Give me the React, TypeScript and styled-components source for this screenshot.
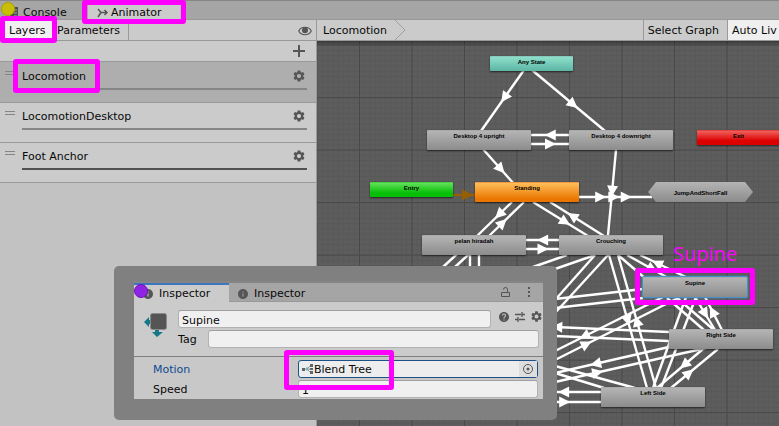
import React from "react";
import styled, { createGlobalStyle, css } from "styled-components";
import { MdHelp, MdInfo, MdSettings } from "react-icons/md";

const GlobalStyle = createGlobalStyle`
  * { box-sizing: border-box; }
  body { margin: 0; overflow: hidden; }
  button, input { font: inherit; color: inherit; }
`;

const ink = "#090909";
const line = "#999999";
const panel = "#cbcbcb";
const iconGrey = "#555555";
const magenta = "#ff00ff";

const Window = styled.div`
  position: relative;
  display: flex;
  flex-direction: column;
  min-height: 100vh;
  overflow: hidden;
  background: #c2c2c2;
  color: ${ink};
  font: 11px/16px "DejaVu Sans", Verdana, sans-serif;
`;

const Highlight = styled.span<{ $x: number; $top: number; $bottom: number }>`
  position: absolute;
  z-index: 3;
  left: ${(p) => -p.$x}px;
  right: ${(p) => -p.$x}px;
  top: ${(p) => -p.$top}px;
  bottom: ${(p) => -p.$bottom}px;
  border: 5px solid ${magenta};
  border-radius: 3px;
  pointer-events: none;
`;

const Dot = styled.span<{ $color: string; $edge: string }>`
  position: absolute;
  z-index: 2;
  left: 1px;
  top: 1px;
  width: 14px;
  height: 14px;
  border: 1px solid ${(p) => p.$edge};
  border-radius: 50%;
  background: ${(p) => p.$color};
`;

const PlainButton = styled.button`
  display: flex;
  align-items: center;
  padding: 0;
  border: 0;
  background: none;
  white-space: nowrap;
`;

const TabBar = styled.div`
  position: relative;
  display: flex;
  height: 20px;
  padding-top: 2px;
  border-top: 1px solid #868686;
  border-bottom: 1px solid ${line};
  background: #a5a5a5;
`;

const ConsoleTab = styled(PlainButton)`
  width: 88px;
  padding: 3px 0 0 10px;
  gap: 5px;
`;

const AnimatorTab = styled(PlainButton)`
  position: relative;
  width: 96px;
  padding: 3px 0 0 9px;
  gap: 3px;
  border-right: 4px solid #bbbbbb;
  background: ${panel};
`;

const Body = styled.div`
  display: flex;
  flex: 1;
`;

const Sidebar = styled.aside`
  flex: 0 0 317px;
  border-right: 1px solid ${line};
`;

const Toolbar = styled.div`
  display: flex;
  height: 21px;
  border-bottom: 1px solid ${line};
  background: ${panel};
`;

const LayersButton = styled(PlainButton)`
  position: relative;
  margin-left: 5px;
  width: 47px;
  padding: 2px 0 0 4px;
  background: #f0f0f0;
`;

const ParametersButton = styled(PlainButton)`
  padding: 2px 8px 0 5px;
  border-right: 1px solid ${line};
`;

const EyeButton = styled(PlainButton)`
  margin-left: auto;
  padding: 1px 4px 0 0;
`;

const AddRow = styled.div`
  display: flex;
  justify-content: flex-end;
  height: 21px;
  padding-right: 11px;
  border-bottom: 1px solid ${line};
  background: ${panel};
`;

const LayerList = styled.ul`
  margin: 0;
  padding: 0;
  list-style: none;
`;

const LayerItem = styled.li<{ $selected?: boolean }>`
  display: flex;
  height: ${(p) => (p.$selected ? 41 : 40)}px;
  padding: ${(p) => (p.$selected ? 6 : 5)}px 9px 0 5px;
  border-bottom: 1px solid ${line};
  background: ${(p) => (p.$selected ? "#aeaeae" : panel)};
`;

const Handle = styled.span`
  width: 10px;
  height: 4px;
  margin: 3px 7px 0 0;
  border: solid #858585;
  border-width: 1px 0;
`;

const LayerBody = styled.div<{ $weight: string }>`
  display: flex;
  flex: 1;
  justify-content: space-between;
  align-items: center;
  height: 22px;
  padding: 0 1px 4px 0;
  border-bottom: 2px solid ${(p) => p.$weight};
`;

const LayerName = styled.span`
  position: relative;
  min-width: 69px;
  padding-top: 2px;
`;

const GraphPanel = styled.main`
  display: flex;
  flex: 1;
  flex-direction: column;
  min-width: 0;
`;

const Crumb = styled(PlainButton)`
  padding-left: 6px;
  gap: 7px;
`;

const CrumbText = styled.span`
  padding-top: 2px;
`;

const ToolButton = styled(PlainButton)<{ $on?: boolean }>`
  padding: 2px 8px 0 4px;
  border-left: 1px solid ${line};
  ${(p) => p.$on && css`width: 52px; padding-right: 0; overflow: hidden; background: #efefef;`}
`;

const Spacer = styled.span`
  flex: 1;
`;

const Canvas = styled.div`
  position: relative;
  flex: 1;
  overflow: hidden;
  background: #5d5d5d;
`;

const CanvasShade = styled.div`
  position: relative;
  height: 5px;
  background: linear-gradient(rgba(0, 0, 0, 0.4), transparent);
`;

const Wires = styled.svg`
  position: absolute;
  inset: 0;
  width: 100%;
  height: 100%;
`;

const fills = {
  grey: "linear-gradient(#b4b4b4, #8c8c8c)",
  teal: "linear-gradient(#8edfc9, #5cb5a5)",
  green: "linear-gradient(#62e05a, #07bf07 70%)",
  orange: "linear-gradient(#ffbe5a, #ea7600 85%)",
  red: "linear-gradient(#f0605c, #dc0000 70%)",
};
type Fill = keyof typeof fills;

const Node = styled.div<{ $x: number; $y: number; $fill: Fill; $small?: boolean; $selected?: boolean }>`
  position: absolute;
  left: ${(p) => p.$x}px;
  top: ${(p) => p.$y}px;
  width: ${(p) => (p.$small ? 83 : 104)}px;
  height: ${(p) => (p.$small ? 15 : 20)}px;
  padding-top: 2px;
  border-top: 1px solid rgba(255, 255, 255, 0.25);
  border-radius: 1px;
  background: ${(p) => fills[p.$fill]};
  box-shadow: ${(p) => (p.$selected ? "0 0 0 1px #4a90c8, 0 0 2px 1px #4a90c8" : "0 1px 2px rgba(0, 0, 0, 0.6)")};
  color: #000000;
  font: bold 6px/7px "Liberation Sans", Arial, sans-serif;
  text-align: center;
`;

const HexNode = styled(Node)`
  width: 105px;
  padding-top: 8px;
  border-top: 0;
  clip-path: polygon(8px 0, 97px 0, 100% 50%, 97px 100%, 8px 100%, 0 50%);
`;

const Callout = styled.div`
  position: absolute;
  left: 356px;
  top: 199px;
  color: ${magenta};
  font: 20px/28px "Open Sans", sans-serif;
`;

const Popup = styled.section`
  position: absolute;
  z-index: 4;
  left: 114px;
  top: 266px;
  width: 443px;
  padding: 15px 14px 21px 20px;
  border-radius: 5px;
  background: #808080;
`;

const PopupBody = styled.div`
  height: 118px;
`;

const InspectorTabs = styled.div`
  display: flex;
  height: 21px;
  border-top: 2px solid #858585;
  background: #a5a5a5;
`;

const InspectorTab = styled(PlainButton)<{ $active?: boolean }>`
  position: relative;
  width: 96px;
  padding: 2px 0 0 8px;
  gap: 5px;
  border-top: 2px solid transparent;
  border-bottom: 1px solid ${line};
  ${(p) => p.$active && css`width: 95px; border-top-color: #3c76c0; border-bottom-color: ${panel}; background: ${panel};`}
`;

const InspectorDot = styled(Dot)`
  left: 0;
  top: -1px;
`;

const TabActions = styled.div`
  display: flex;
  flex: 1;
  justify-content: flex-end;
  align-items: center;
  gap: 8px;
  padding-right: 11px;
  border-bottom: 1px solid ${line};
`;

const StateHeader = styled.div`
  display: grid;
  grid-template-columns: 34px 1fr;
  gap: 10px;
  height: 55px;
  padding: 8px 4px 0 0;
  border-bottom: 1px solid #7f7f7f;
  background: ${panel};

  > svg { margin: 2px 0 0 9px; }
`;

const HeaderFields = styled.div`
  display: flex;
  flex-direction: column;
  gap: 2px;
`;

const Row = styled.div`
  display: flex;
  align-items: center;
  height: 18px;
`;

const Field = styled.input`
  flex: 1;
  min-width: 0;
  height: 18px;
  padding: 2px 3px 0;
  border: 1px solid #b2b2b2;
  border-top-color: #a0a0a0;
  border-radius: 3px;
  background: #f0f0f0;
  outline: none;
`;

const TagLabel = styled.label`
  width: 30px;
  padding-top: 1px;
`;

const HeaderActions = styled.div`
  display: flex;
  align-self: flex-start;
  gap: 4px;
  padding: 0 0 0 7px;
  margin-right: -4px;
  color: ${iconGrey};
`;

const Props = styled.div`
  display: flex;
  flex-direction: column;
  gap: 2px;
  height: 42px;
  padding: 3px 5px 0 19px;
  background: #c8c8c8;
`;

const PropLabel = styled.label<{ $active?: boolean }>`
  width: 145px;
  padding-top: 2px;
  color: ${(p) => (p.$active ? "#0d4a90" : ink)};
`;

const MotionField = styled.div`
  position: relative;
  display: flex;
  flex: 1;
  align-items: center;
  height: 18px;
  padding: 0 0 0 3px;
  border: 1px solid #1d5087;
  border-radius: 3px;
  background: #ededed;

  input { flex: 1; min-width: 0; padding: 2px 0 0; border: 0; background: none; outline: none; }
`;

const Picker = styled(PlainButton)`
  justify-content: center;
  width: 18px;
  height: 16px;
  background: #dedede;
`;

const MotionHighlight = styled(Highlight)`
  left: -15px;
  right: 143px;
`;

type Wire = [number, number, number, number, ...number[]];

// x1, y1, x2, y2, then the distances along the line, in percent, of its arrow heads;
// a negative distance turns the head back towards the start.
const wires: Wire[] = [
  [524, 70, 481, 131, 45],
  [532, 70, 605, 131, 56],
  [569, 135, 531, 135, 48],
  [531, 144, 569, 144, 50],
  [482, 148, 514, 184, 58],
  [579, 197, 652, 197, 29, 47, 64],
  [616, 150, 608, 235, 48],
  [512, 202, 477, 236, 36],
  [489, 236, 524, 202, 38],
  [533, 202, 588, 236, 58],
  [604, 236, 550, 202, 58],
  [559, 240, 526, 240, 48],
  [526, 249, 559, 249, 50],
  [457, 254, 443, 267],
  [469, 254, 455, 267],
  [470, 254, 470, 268],
  [479, 254, 479, 268],
  [567, 255, 533, 267],
  [595, 255, 555, 269],
  [595, 255, 555, 300],
  [608, 255, 555, 313],
  [609, 255, 647, 388, 49],
  [618, 255, 656, 388, -50],
  [618, 255, 646, 279],
  [627, 255, 670, 279, 58],
  [640, 255, 690, 279, -35],
  [555, 299, 643, 289],
  [555, 308, 643, 298],
  [555, 351, 665, 296, -27],
  [555, 360, 680, 297, 25],
  [669, 332, 555, 327, 98],
  [669, 341, 555, 336],
  [669, 347, 555, 373, 64],
  [555, 382, 706, 348, 28],
  [555, 366, 635, 388],
  [555, 373, 604, 388],
  [601, 392, 555, 392, 80],
  [555, 402, 601, 402, 20],
  [686, 297, 653, 388],
  [696, 297, 661, 388],
  [667, 298, 704, 330],
  [677, 298, 714, 330],
  [695, 297, 715, 330, 50],
  [705, 297, 722, 330, -45],
  [703, 349, 657, 388, 40],
  [718, 349, 671, 388, -62],
];

function Connection({ wire, color = "#ffffff" }: { wire: Wire; color?: string }) {
  const [x1, y1, x2, y2, ...heads] = wire;
  const angle = (Math.atan2(y2 - y1, x2 - x1) * 180) / Math.PI;
  return (
    <g fill={color} stroke="none">
      <line x1={x1} y1={y1} x2={x2} y2={y2} stroke={color} strokeWidth="2.4" />
      {heads.map((h) => {
        const t = Math.abs(h) / 100;
        const turn = angle + (h < 0 ? 180 : 0);
        return (
          <path
            key={h}
            d="M-5-5.5 6 0-5 5.5z"
            transform={`translate(${x1 + (x2 - x1) * t} ${y1 + (y2 - y1) * t}) rotate(${turn})`}
          />
        );
      })}
    </g>
  );
}

function GraphLines() {
  return (
    <Wires aria-hidden="true">
      <defs>
        <pattern id="minor" x="42" y="3.6" width="5.25" height="5.25" patternUnits="userSpaceOnUse">
          <path d="M.5 0v5.25M0 .5h5.25" stroke="#585858" strokeWidth="1" />
        </pattern>
        <pattern id="major" x="42" y="3.6" width="52.5" height="52.5" patternUnits="userSpaceOnUse">
          <path d="M.5 0v52.5M0 .5h52.5" stroke="#494949" strokeWidth="1" />
        </pattern>
      </defs>
      <rect width="100%" height="100%" fill="url(#minor)" />
      <rect width="100%" height="100%" fill="url(#major)" />
      <g transform="translate(-317 -41)">
        <Connection wire={[453, 195, 475, 195, 64]} color="#966000" />
        {wires.map((w) => (
          <Connection key={w.join()} wire={w} />
        ))}
      </g>
    </Wires>
  );
}

const nodes: { name: string; x: number; y: number; fill: Fill; small?: boolean }[] = [
  { name: "Any State", x: 173, y: 15, fill: "teal", small: true },
  { name: "Desktop 4 upright", x: 110, y: 89, fill: "grey" },
  { name: "Desktop 4 downright", x: 252, y: 89, fill: "grey" },
  { name: "Exit", x: 380, y: 89, fill: "red", small: true },
  { name: "Entry", x: 53, y: 141, fill: "green", small: true },
  { name: "Standing", x: 158, y: 141, fill: "orange" },
  { name: "pelan hiradah", x: 105, y: 194, fill: "grey" },
  { name: "Crouching", x: 242, y: 194, fill: "grey" },
  { name: "Right Side", x: 352, y: 288, fill: "grey" },
  { name: "Left Side", x: 284, y: 346, fill: "grey" },
];

const layers = [
  { name: "Locomotion", weight: "#868686", selected: true },
  { name: "LocomotionDesktop", weight: "#868686" },
  { name: "Foot Anchor", weight: "#515151" },
];

const ConsoleIcon = () => (
  <svg width="8" height="12" viewBox="0 0 8 12">
    <path d="M0 0h8v12H0z" fill="#4e4e4e" />
    <path d="M4 3h3M4 6h3M4 9h3" stroke="#a5a5a5" />
  </svg>
);

const AnimatorIcon = () => (
  <svg width="11" height="10" viewBox="0 0 11 10" fill="none" stroke={iconGrey} strokeWidth="1.5">
    <path d="M1 1l3 3.5h6M1 9l3-4.5M7.5 2 10 4.5 7.5 7" />
  </svg>
);

const EyeIcon = () => (
  <svg width="14" height="10" viewBox="0 0 14 10">
    <path d="M.7 5C3 0 11 0 13.3 5 11 10 3 10 .7 5z" fill="none" stroke={iconGrey} strokeWidth="1.1" />
    <circle cx="7" cy="4.3" r="3" fill={iconGrey} />
  </svg>
);

const PlusIcon = () => (
  <svg width="12" height="12" viewBox="0 0 12 12" stroke={iconGrey} strokeWidth="2">
    <path d="M6 0v12M0 6h12" />
  </svg>
);

const CrumbArrow = () => (
  <svg width="12" height="20" viewBox="0 0 12 20" fill="none" stroke="#a0a0a0">
    <path d="M1 0l10 10L1 20" />
  </svg>
);

const LockIcon = () => (
  <svg width="9" height="10" viewBox="0 0 9 10" fill="none" stroke={iconGrey}>
    <path d="M.5 5.500h8v4h-8zM6.500 5.500V2.500a2 2 0 0 0-4 0" />
  </svg>
);

const MenuIcon = () => (
  <svg width="14" height="12" viewBox="0 0 14 12" fill={iconGrey}>
    <path d="M10 1h2v2h-2zM10 5h2v2h-2zM10 9h2v2h-2z" />
  </svg>
);

const PresetIcon = () => (
  <svg width="12" height="12" viewBox="0 0 12 12" fill="none" stroke={iconGrey} strokeWidth="1.3">
    <path d="M1 3.500h6M8 1v5M8 3.500h3M1 8.500h2.500M4 6v5M5 8.500h6" />
  </svg>
);

const StateIcon = () => (
  <svg width="24" height="25" viewBox="0 0 24 25">
    <path d="M1 10 6 5v3h3v4H6v3zM12 17h4v3h4l-6 5-5-5h3z" fill="#147987" />
    <rect x="7.5" y="1.5" width="16" height="16" rx="2" fill="#555555" stroke="#8a8a8a" />
  </svg>
);

const TreeIcon = () => (
  <svg width="12" height="12" viewBox="0 0 12 12">
    <path d="M2 6h3l4-4M5 6h5M5 6l4 4M5 4v4" fill="none" stroke="#7ba5a8" />
    <path d="M0 5h3v3H0zM8 1h3v3H8zM8 5h3v2H8zM8 8h3v3H8z" fill="#5e6667" />
  </svg>
);

const PickerIcon = () => (
  <svg width="12" height="12" viewBox="0 0 12 12">
    <circle cx="6" cy="6" r="4.5" fill="none" stroke={iconGrey} />
    <circle cx="6" cy="6" r="1.5" fill={iconGrey} />
  </svg>
);

function Inspector() {
  return (
    <Popup>
      <PopupBody>
        <InspectorTabs>
          <InspectorTab $active>
            <InspectorDot $color="#8f24e4" $edge="#7312bd" />
            <MdInfo size={12} color={iconGrey} />
            Inspector
          </InspectorTab>
          <InspectorTab>
            <MdInfo size={12} color={iconGrey} />
            Inspector
          </InspectorTab>
          <TabActions>
            <PlainButton aria-label="Lock"><LockIcon /></PlainButton>
            <PlainButton aria-label="Menu"><MenuIcon /></PlainButton>
          </TabActions>
        </InspectorTabs>
        <StateHeader>
          <StateIcon />
          <HeaderFields>
            <Row>
              <Field aria-label="Name" defaultValue="Supine" />
              <HeaderActions>
                <PlainButton aria-label="Help"><MdHelp size={12} color={iconGrey} /></PlainButton>
                <PlainButton aria-label="Presets"><PresetIcon /></PlainButton>
                <PlainButton aria-label="Settings"><MdSettings size={13} color={iconGrey} /></PlainButton>
              </HeaderActions>
            </Row>
            <Row>
              <TagLabel htmlFor="tag">Tag</TagLabel>
              <Field id="tag" />
            </Row>
          </HeaderFields>
        </StateHeader>
        <Props>
          <Row>
            <PropLabel $active htmlFor="motion">Motion</PropLabel>
            <MotionField>
              <TreeIcon />
              <input id="motion" defaultValue="Blend Tree" />
              <Picker aria-label="Pick motion"><PickerIcon /></Picker>
              <MotionHighlight $x={0} $top={11} $bottom={13} />
            </MotionField>
          </Row>
          <Row>
            <PropLabel htmlFor="speed">Speed</PropLabel>
            <Field id="speed" defaultValue="1" />
          </Row>
        </Props>
      </PopupBody>
    </Popup>
  );
}

export default function App() {
  return (
    <Window>
      <GlobalStyle />
      <TabBar>
        <Dot $color="#c8be08" $edge="#aaa100" />
        <ConsoleTab><ConsoleIcon />Console</ConsoleTab>
        <AnimatorTab>
          <AnimatorIcon />
          Animator
          <Highlight $x={6} $top={3} $bottom={5} />
        </AnimatorTab>
      </TabBar>
      <Body>
        <Sidebar>
          <Toolbar>
            <LayersButton>
              Layers
              <Highlight $x={5} $top={4} $bottom={3} />
            </LayersButton>
            <ParametersButton>Parameters</ParametersButton>
            <EyeButton aria-label="Show layers"><EyeIcon /></EyeButton>
          </Toolbar>
          <AddRow>
            <PlainButton aria-label="Add layer"><PlusIcon /></PlainButton>
          </AddRow>
          <LayerList>
            {layers.map((l) => (
              <LayerItem key={l.name} $selected={l.selected}>
                <Handle />
                <LayerBody $weight={l.weight}>
                  <LayerName>
                    {l.name}
                    {l.selected && <Highlight $x={9} $top={8} $bottom={8} />}
                  </LayerName>
                  <PlainButton aria-label={`${l.name} settings`}><MdSettings size={14} color={iconGrey} /></PlainButton>
                </LayerBody>
              </LayerItem>
            ))}
          </LayerList>
        </Sidebar>
        <GraphPanel>
          <Toolbar>
            <Crumb><CrumbText>Locomotion</CrumbText><CrumbArrow /></Crumb>
            <Spacer />
            <ToolButton>Select Graph</ToolButton>
            <ToolButton $on>Auto Liv</ToolButton>
          </Toolbar>
          <Canvas>
            <GraphLines />
            <CanvasShade />
            {nodes.map((n) => (
              <Node key={n.name} $x={n.x} $y={n.y} $fill={n.fill} $small={n.small}>{n.name}</Node>
            ))}
            <HexNode $x={331} $y={141} $fill="grey">JumpAndShortFall</HexNode>
            <Node $x={326} $y={236} $fill="grey" $selected>
              Supine
              <Highlight $x={8} $top={10} $bottom={8} />
            </Node>
            <Callout>Supine</Callout>
          </Canvas>
        </GraphPanel>
      </Body>
      <Inspector />
    </Window>
  );
}
